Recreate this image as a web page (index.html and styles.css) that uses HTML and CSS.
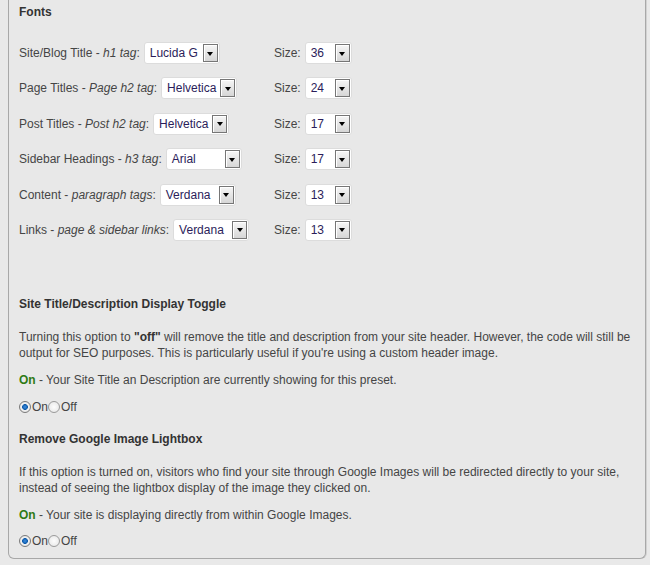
FILE: index.html
```html
<!DOCTYPE html>
<html>
<head>
<meta charset="utf-8">
<link rel="stylesheet" href="styles.css">
</head>
<body>
<div class="panel">
  <h3 class="heading heading-first">Fonts</h3>

  <div class="font-rows">
    <div class="font-row">
      <div class="font-cell"><span class="label">Site/Blog Title - <em>h1 tag</em>:</span><span class="select sel-font"><span class="sel-text">Lucida G</span><span class="sel-btn"></span></span></div>
      <div class="size-cell"><span class="label">Size:</span><span class="select sel-size"><span class="sel-text">36</span><span class="sel-btn"></span></span></div>
    </div>
    <div class="font-row">
      <div class="font-cell"><span class="label">Page Titles - <em>Page h2 tag</em>:</span><span class="select sel-font"><span class="sel-text">Helvetica</span><span class="sel-btn"></span></span></div>
      <div class="size-cell"><span class="label">Size:</span><span class="select sel-size"><span class="sel-text">24</span><span class="sel-btn"></span></span></div>
    </div>
    <div class="font-row">
      <div class="font-cell"><span class="label">Post Titles - <em>Post h2 tag</em>:</span><span class="select sel-font"><span class="sel-text">Helvetica</span><span class="sel-btn"></span></span></div>
      <div class="size-cell"><span class="label">Size:</span><span class="select sel-size"><span class="sel-text">17</span><span class="sel-btn"></span></span></div>
    </div>
    <div class="font-row">
      <div class="font-cell"><span class="label">Sidebar Headings - <em>h3 tag</em>:</span><span class="select sel-font"><span class="sel-text">Arial</span><span class="sel-btn"></span></span></div>
      <div class="size-cell"><span class="label">Size:</span><span class="select sel-size"><span class="sel-text">17</span><span class="sel-btn"></span></span></div>
    </div>
    <div class="font-row">
      <div class="font-cell"><span class="label">Content - <em>paragraph tags</em>:</span><span class="select sel-font"><span class="sel-text">Verdana</span><span class="sel-btn"></span></span></div>
      <div class="size-cell"><span class="label">Size:</span><span class="select sel-size"><span class="sel-text">13</span><span class="sel-btn"></span></span></div>
    </div>
    <div class="font-row">
      <div class="font-cell"><span class="label">Links - <em>page &amp; sidebar links</em>:</span><span class="select sel-font"><span class="sel-text">Verdana</span><span class="sel-btn"></span></span></div>
      <div class="size-cell"><span class="label">Size:</span><span class="select sel-size"><span class="sel-text">13</span><span class="sel-btn"></span></span></div>
    </div>
  </div>

  <h3 class="heading heading-toggle">Site Title/Description Display Toggle</h3>
  <p class="desc">Turning this option to <strong>"off"</strong> will remove the title and description from your site header. However, the code will still be output for SEO purposes. This is particularly useful if you're using a custom header image.</p>
  <p class="status"><span class="on">On</span> - Your Site Title an Description are currently showing for this preset.</p>
  <div class="radios"><span class="radio checked"></span><span class="radio-label">On</span><span class="radio"></span><span class="radio-label">Off</span></div>

  <h3 class="heading heading-lightbox">Remove Google Image Lightbox</h3>
  <p class="desc">If this option is turned on, visitors who find your site through Google Images will be redirected directly to your site, instead of seeing the lightbox display of the image they clicked on.</p>
  <p class="status"><span class="on">On</span> - Your site is displaying directly from within Google Images.</p>
  <div class="radios radios-last"><span class="radio checked"></span><span class="radio-label">On</span><span class="radio"></span><span class="radio-label">Off</span></div>
</div>
</body>
</html>
```

FILE: styles.css
```css
html, body {
  margin: 0;
  padding: 0;
  background: #e9e9e9;
}
body {
  font-family: "Liberation Sans", Arial, sans-serif;
  font-size: 12px;
  line-height: 16px;
  color: #454545;
  padding: 0 4px 0 8px;
  width: 638px;
}
.panel {
  background: #e8e8e8;
  border: 1px solid #a8a8a8;
  border-top: none;
  border-radius: 0 0 6px 6px;
  padding: 4px 10px 9px 10px;
  box-shadow: 1px 0 0 #d2d2d2;
}
.heading {
  margin: 0;
  font-size: 12px;
  line-height: 16px;
  font-weight: bold;
  color: #333;
}
.font-rows {
  margin-top: 22px;
  display: flex;
  flex-direction: column;
  gap: 13.4px;
}
.font-row {
  display: flex;
  align-items: center;
  height: 22px;
}
.font-cell {
  width: 255px;
  display: flex;
  align-items: center;
  gap: 4px;
}
.size-cell {
  display: flex;
  align-items: center;
  gap: 4px;
}
.label em {
  font-style: italic;
}
.select {
  position: relative;
  display: flex;
  align-items: center;
  height: 22px;
  box-sizing: border-box;
  background: #fff;
  border: 1px solid #dcdcdc;
  border-radius: 3px;
  color: #2b1d5a;
}
.sel-font { width: 76px; }
.sel-size { width: 47px; }
.sel-text {
  padding-left: 5px;
  flex: 1;
  white-space: nowrap;
  overflow: hidden;
}
.sel-btn {
  width: 15px;
  height: 18px;
  box-sizing: border-box;
  margin-right: 1px;
  border: 1px solid #767676;
  background: linear-gradient(#f6f6f6, #d6d6d6);
  box-shadow: inset 1px 1px 0 #fff;
  display: flex;
  align-items: center;
  justify-content: center;
  flex-shrink: 0;
}
.sel-btn::after {
  content: "";
  width: 0;
  height: 0;
  border-left: 3.5px solid transparent;
  border-right: 3.5px solid transparent;
  border-top: 4px solid #000;
  margin-top: 1px;
}
.heading-toggle { margin-top: 55px; }
.heading-lightbox { margin-top: 16px; }
.desc {
  margin: 17px 0 0 0;
}
.desc strong { color: #333; }
.status {
  margin: 11px 0 0 0;
}
.on {
  color: #2f7a14;
  font-weight: bold;
}
.radios {
  margin-top: 11px;
  display: flex;
  align-items: center;
  height: 16px;
  color: #444;
}
.radio {
  width: 12px;
  height: 12px;
  box-sizing: border-box;
  border-radius: 50%;
  border: 1px solid #9a9a9a;
  background: radial-gradient(circle, #fdfdfd 0, #e4e4e4 100%);
}
.radio.checked {
  background: radial-gradient(circle, #3d8de0 0, #0f5cab 2.6px, #f2f2f2 3.2px, #dcdcdc 100%);
  border-color: #7a7a7a;
}
.radio-label {
  margin-left: 1px;
}
.radios-last { margin-top: 10px; }
```
